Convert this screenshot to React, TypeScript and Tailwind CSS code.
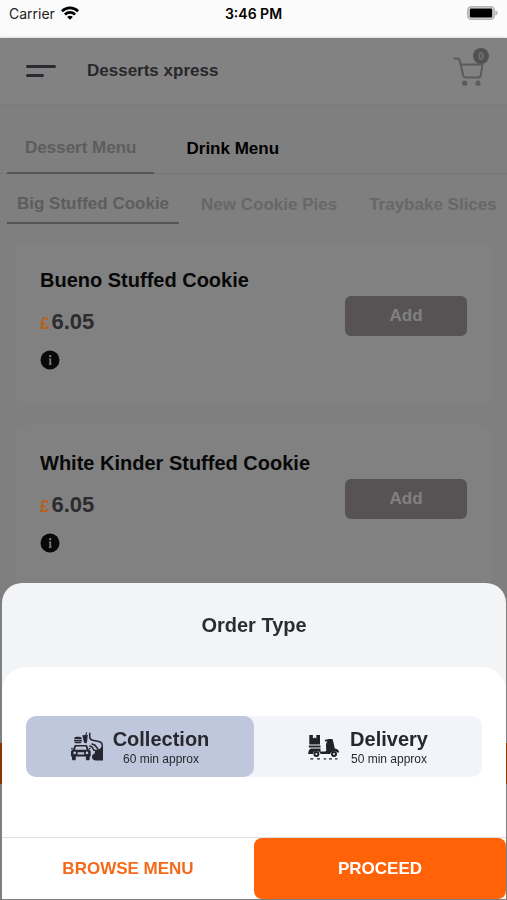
import { useState } from 'react';

type OrderType = 'collection' | 'delivery';

const menus = ['Dessert Menu', 'Drink Menu'];

const categories = ['Big Stuffed Cookie', 'New Cookie Pies', 'Traybake Slices'];

const products = [
  { name: 'Bueno Stuffed Cookie', price: '6.05' },
  { name: 'White Kinder Stuffed Cookie', price: '6.05' },
];

function WifiIcon() {
  return (
    <svg viewBox="0 0 18 14" className="h-[14px] w-[18px]" fill="none" stroke="#000" strokeWidth="2.6" aria-hidden="true">
      <path d="M.9 5.2C5.500 .7 12.500 .7 17.100 5.200" />
      <path d="M3.900 8.500c2.900-2.800 7.300-2.800 10.200 0" />
      <path d="M6.200 10.900c1.600-1.500 4-1.500 5.600 0L9 13.800z" fill="#000" stroke="none" />
    </svg>
  );
}

function BatteryIcon() {
  return (
    <svg viewBox="0 0 31 14" className="h-[14px] w-[31px]" aria-hidden="true">
      <rect x=".8" y=".8" width="26.4" height="12.4" rx="3.6" fill="#ddd" stroke="#b4b4b4" strokeWidth="1.6" />
      <rect x="2.8" y="2.4" width="22.4" height="9.2" rx="1.4" fill="#000" />
      <path d="M28.4 4.6c1.500.5 2.200 1.300 2.200 2.400s-.7 1.900-2.200 2.400z" fill="#b0b0b0" />
    </svg>
  );
}

function CartIcon() {
  return (
    <svg viewBox="0 0 32 30" className="h-[30px] w-[32px]" fill="none" stroke="#5b5b5b" strokeWidth="2" strokeLinecap="round" strokeLinejoin="round" aria-hidden="true">
      <path d="M1.500 2.500h3c1.100 0 1.800.5 2.100 1.600l3.600 15.100c.4 1.500 1.200 2.300 2.600 2.300h12.400c1.300 0 2.200-.8 2.500-2.200L29.500 8.500H8" />
      <circle cx="11.700" cy="27.200" r="2.600" fill="#5b5b5b" stroke="none" />
      <circle cx="25" cy="27.200" r="2.600" fill="#5b5b5b" stroke="none" />
    </svg>
  );
}

function InfoIcon() {
  return (
    <svg viewBox="0 0 20 20" className="size-5" aria-hidden="true">
      <circle cx="10" cy="10" r="9.500" fill="#090909" />
      <circle cx="10.200" cy="6.100" r="1.200" fill="#808080" />
      <path d="M8.900 8.400h2.200v5.300h.7v1H8.700v-1h.7V9.400h-.5z" fill="#808080" />
    </svg>
  );
}

function CollectionIcon() {
  return (
    <svg viewBox="0 0 32 32" className="size-8" fill="#25262f" aria-hidden="true">
      {/* food and drink */}
      <path d="M3.300 8c0-1.600.9-2.300 2.200-2.300h3c1.300 0 2.200.7 2.200 2.300zM3 8.700h8v1.200H3zM3.300 10.600h7.400c0 1.200-.7 1.700-1.700 1.700H5c-1 0-1.700-.5-1.700-1.700z" />
      <path d="M11.300 4.300l3-.4.900-2.600 1 .3-.7 2.300h1.300l-.8 7c-.1.900-.6 1.300-1.500 1.300-1 0-1.600-.5-1.700-1.400z" />
      {/* car */}
      <path
        fillRule="evenodd"
        d="M4.800 14h10c.9 0 1.500.4 1.700 1.200l1.200 3.500c1.400.3 2 1.100 2 2.500v4.400h-1v2.400c0 .8-.5 1.300-1.300 1.300h-1.200c-.8 0-1.300-.5-1.300-1.300v-2.400H4.800V28c0 .8-.5 1.300-1.300 1.300H2.300C1.500 29.300 1 28.800 1 28v-2.400H0v-4.400c0-1.400.6-2.200 2-2.500l1.200-3.500c.2-.8.7-1.200 1.600-1.200zM5 15.500l-1 3.200h11.700l-1-3.200zM3.700 20.600a1.300 1.300 0 1 0 0 2.600 1.300 1.300 0 0 0 0-2.600zM16 20.600a1.300 1.300 0 1 0 0 2.600 1.300 1.300 0 0 0 0-2.600zM6.600 21.200h6.500v2.300H6.600z"
      />
      <path d="M0 17h2l-.5 1.500H.5zM17.700 17h2l-.5 1.500h-1z" />
      {/* arm reaching to the car */}
      <path d="M18.700 1.800v4c0 2 1 3.100 3 3.500l6 1.300c2.300.5 3.500 1.700 3.500 3.900v9" fill="none" stroke="#25262f" strokeWidth="1.500" />
      <path d="M18.800 15l2.400 1 1.600 3 2.200.6M21 13l3 1.200 3 4" fill="none" stroke="#25262f" strokeWidth="1.500" strokeLinecap="round" />
      <path d="M32 15.500v13.900h-6.800c-2.600 0-4.200-1.400-4.200-3.500 0-1.900 1-3.100 2.800-3.500-.2-2.300.9-3.700 2.900-3.900 1.700-.2 2.800-1 3.400-2.300z" />
    </svg>
  );
}

function DeliveryIcon() {
  return (
    <svg viewBox="0 0 32 28" className="h-7 w-8" fill="#222329" aria-hidden="true">
      {/* parcels */}
      <path d="M1.300 2h3.600v3.600l1.700-1 1.700 1V2H12v9.500H1.300zM.8 12.500h11.700v2H.8z" />
      {/* body */}
      <path d="M2.600 15.500h9.900v3h4.600c.7 0 1.100-.5 1.100-1.200l-.2-4.800c0-1.900.5-3.300 1.500-4.300l-2.600.2V6.900L20.500 6h2.700c1 0 1.600.5 1.800 1.400l1.800 8.200c2.700.3 4.200 1.700 4.400 4h-1.800a4.200 4.200 0 0 0-7.300 1.500h-9.500a4 4 0 0 0-7.800 0H.2c0-2.700.8-4.600 2.400-5.600z" />
      <circle cx="8.400" cy="21" r="3" />
      <circle cx="8.400" cy="21" r="1" fill="#f3f4fb" />
      <circle cx="26" cy="21" r="3" />
      <circle cx="26" cy="21" r="1" fill="#f3f4fb" />
      {/* road */}
      <path d="M2.300 25.200h3v1.200h-3zM9 25.200h3v1.200H9zM15.700 25.200h2.500v1.200h-2.500zM21 25.200h3v1.200h-3zM27 25.200h2.500v1.200H27z" />
    </svg>
  );
}

const orderTypes = [
  { id: 'collection' as OrderType, label: 'Collection', time: '60 min approx', Icon: CollectionIcon },
  { id: 'delivery' as OrderType, label: 'Delivery', time: '50 min approx', Icon: DeliveryIcon },
];

function StatusBar() {
  return (
    <div className="grid h-[38px] grid-cols-3 bg-[#fbfbfb] px-[9px] pt-[6px] font-['Inter',sans-serif] text-[14px] leading-4 text-black">
      <div className="flex gap-[6px]">
        <span className="font-normal text-[#222]">Carrier</span>
        <WifiIcon />
      </div>
      <div className="text-center font-semibold">3:46 PM</div>
      <div className="flex justify-end">
        <BatteryIcon />
      </div>
    </div>
  );
}

export default function App() {
  const [orderType, setOrderType] = useState<OrderType>('collection');

  return (
    <div className="h-screen overflow-hidden bg-[#7f7f7f] font-['Liberation_Sans',Arial,sans-serif] font-bold">
      <StatusBar />

      {/* Header */}
      <header className="flex h-[66px] items-center bg-[#828282] px-[18px] shadow-[0_1px_3px_#7a7a7a]">
        <button aria-label="Open menu" className="flex w-[45px] flex-col gap-[6px] pl-2">
          <span className="h-[3px] w-[30px] rounded-full bg-[#2a2b30]" />
          <span className="h-[3px] w-[18px] rounded-full bg-[#2a2b30]" />
        </button>
        <h1 className="ml-6 text-[17px] text-[#28282b]">Desserts xpress</h1>
        <button aria-label="Cart" className="relative ml-auto mr-1">
          <CartIcon />
          <span className="absolute -top-2 -right-1 flex size-4 items-center justify-center rounded-full bg-[#525252] text-[10px] text-[#757575]">
            0
          </span>
        </button>
      </header>

      {/* Menus */}
      <nav className="mt-5 flex h-[50px] border-b border-[#757575] pl-[7px] text-[17px]">
        {menus.map((menu, i) => (
          <button
            key={menu}
            className={`px-[18px] ${i === 0 ? '-mb-px mr-[14px] border-b-2 border-[#555] text-[#5d5d5d]' : 'text-black'}`}
          >
            {menu}
          </button>
        ))}
      </nav>

      {/* Categories */}
      <nav className="flex h-[50px] gap-3 overflow-hidden pl-[7px] text-[17px] whitespace-nowrap">
        {categories.map((category, i) => (
          <button
            key={category}
            className={`px-[10px] pt-3 ${i === 0 ? 'border-b-2 border-[#555] text-[#5d5d5d]' : 'text-[#676767]'}`}
          >
            {category}
          </button>
        ))}
      </nav>

      {/* Products */}
      <main className="flex flex-col gap-[21px] px-[15px] pt-[18px]">
        {products.map((product) => (
          <article key={product.name} className="flex h-[162px] items-start rounded-xl bg-[#818181] pr-[25px] pl-[25px]">
            <div className="flex-1 pt-[26px]">
              <h2 className="text-[20px] leading-6 text-[#080808]">{product.name}</h2>
              <p className="mt-4 flex items-baseline gap-[2px] text-[22px] leading-7 text-[#2c2c2f]">
                <span className="text-[17px] text-[#b9601c]">£</span>
                {product.price}
              </p>
              <button aria-label={`About ${product.name}`} className="mt-3 block">
                <InfoIcon />
              </button>
            </div>
            <button className="mt-[54px] h-10 w-[122px] rounded-md bg-[#575354] text-[17px] text-[#808080]">Add</button>
          </article>
        ))}
      </main>

      <div className="fixed inset-x-0 bottom-[116px] h-[41px] bg-[#8a3800]" />

      {/* Order type sheet */}
      <section
        role="dialog"
        aria-labelledby="order-type-title"
        className="fixed right-px bottom-px left-[2px] overflow-hidden rounded-t-[20px] bg-[#f3f4f6]"
      >
        <h2 id="order-type-title" className="py-[30px] text-center text-[20px] leading-6 text-[#2c2d30]">
          Order Type
        </h2>
        <div className="rounded-t-3xl bg-white">
          <div className="px-6 pt-[49px] pb-[60px]">
            <div className="grid h-[61px] grid-cols-2 rounded-[10px] bg-[#f3f4fb]">
              {orderTypes.map(({ id, label, time, Icon }) => (
                <label
                  key={id}
                  className={`flex cursor-pointer items-center justify-center gap-[10px] rounded-[10px] text-[#26282d] ${orderType === id ? 'bg-[#bfc7dd]' : ''}`}
                >
                  <input
                    type="radio"
                    name="order-type"
                    value={id}
                    checked={orderType === id}
                    onChange={() => setOrderType(id)}
                    className="sr-only"
                  />
                  <Icon />
                  <span className="text-center">
                    <span className="block text-[20px] leading-6">{label}</span>
                    <span className="block text-[12px] leading-4 font-normal">{time}</span>
                  </span>
                </label>
              ))}
            </div>
          </div>
          <div className="grid h-[62px] grid-cols-2 border-t border-[#e2e2e2] text-[17px]">
            <button className="text-[#f56a1a]">BROWSE MENU</button>
            <button className="rounded-lg bg-[#ff6207] text-white">PROCEED</button>
          </div>
        </div>
      </section>
    </div>
  );
}
